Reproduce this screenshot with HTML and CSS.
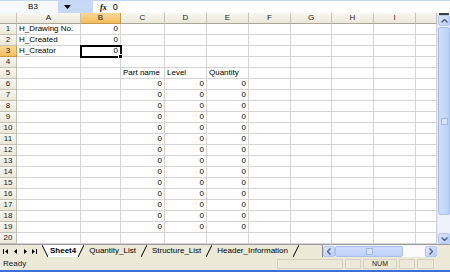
FILE: index.html
```html
<!DOCTYPE html>
<html lang="en">
<head>
    <meta charset="UTF-8">
    <title>Sheet4</title>
    <link rel="stylesheet" href="styles.css">
</head>
<body>

<div class="app">
    <div class="formula-bar">
        <div class="name-box">B3</div>
        <div class="name-drop">
            <svg width="7" height="4" viewBox="0 0 7 4"><polygon points="0,0 7,0 3.5,4" fill="#000"/></svg>
        </div>
        <div class="formula">
            <span class="fx">fx</span>
            <span class="fvalue">0</span>
        </div>
    </div>

    <div class="sheet">
        <table class="grid">
            <colgroup>
                <col class="w-hdr"><col class="w-a"><col class="w-b"><col class="w-c"><col class="w-d">
                <col class="w-e"><col class="w-f"><col class="w-g"><col class="w-h"><col class="w-i"><col class="w-j">
            </colgroup>
            <thead>
                <tr>
                    <th class="corner"></th>
                    <th>A</th><th class="sel">B</th><th>C</th><th>D</th><th>E</th>
                    <th>F</th><th>G</th><th>H</th><th>I</th><th class="split"></th>
                </tr>
            </thead>
            <tbody>
                <tr><th>1</th><td>H_Drawing No.</td><td class="n">0</td><td></td><td></td><td></td><td></td><td></td><td></td><td></td><td></td></tr>
                <tr><th>2</th><td>H_Created</td><td class="n">0</td><td></td><td></td><td></td><td></td><td></td><td></td><td></td><td></td></tr>
                <tr><th class="sel">3</th><td>H_Creator</td><td class="n active">0</td><td></td><td></td><td></td><td></td><td></td><td></td><td></td><td></td></tr>
                <tr><th>4</th><td></td><td></td><td></td><td></td><td></td><td></td><td></td><td></td><td></td><td></td></tr>
                <tr><th>5</th><td></td><td></td><td>Part name</td><td>Level</td><td>Quantity</td><td></td><td></td><td></td><td></td><td></td></tr>
                <tr><th>6</th><td></td><td></td><td class="n">0</td><td class="n">0</td><td class="n">0</td><td></td><td></td><td></td><td></td><td></td></tr>
                <tr><th>7</th><td></td><td></td><td class="n">0</td><td class="n">0</td><td class="n">0</td><td></td><td></td><td></td><td></td><td></td></tr>
                <tr><th>8</th><td></td><td></td><td class="n">0</td><td class="n">0</td><td class="n">0</td><td></td><td></td><td></td><td></td><td></td></tr>
                <tr><th>9</th><td></td><td></td><td class="n">0</td><td class="n">0</td><td class="n">0</td><td></td><td></td><td></td><td></td><td></td></tr>
                <tr><th>10</th><td></td><td></td><td class="n">0</td><td class="n">0</td><td class="n">0</td><td></td><td></td><td></td><td></td><td></td></tr>
                <tr><th>11</th><td></td><td></td><td class="n">0</td><td class="n">0</td><td class="n">0</td><td></td><td></td><td></td><td></td><td></td></tr>
                <tr><th>12</th><td></td><td></td><td class="n">0</td><td class="n">0</td><td class="n">0</td><td></td><td></td><td></td><td></td><td></td></tr>
                <tr><th>13</th><td></td><td></td><td class="n">0</td><td class="n">0</td><td class="n">0</td><td></td><td></td><td></td><td></td><td></td></tr>
                <tr><th>14</th><td></td><td></td><td class="n">0</td><td class="n">0</td><td class="n">0</td><td></td><td></td><td></td><td></td><td></td></tr>
                <tr><th>15</th><td></td><td></td><td class="n">0</td><td class="n">0</td><td class="n">0</td><td></td><td></td><td></td><td></td><td></td></tr>
                <tr><th>16</th><td></td><td></td><td class="n">0</td><td class="n">0</td><td class="n">0</td><td></td><td></td><td></td><td></td><td></td></tr>
                <tr><th>17</th><td></td><td></td><td class="n">0</td><td class="n">0</td><td class="n">0</td><td></td><td></td><td></td><td></td><td></td></tr>
                <tr><th>18</th><td></td><td></td><td class="n">0</td><td class="n">0</td><td class="n">0</td><td></td><td></td><td></td><td></td><td></td></tr>
                <tr><th>19</th><td></td><td></td><td class="n">0</td><td class="n">0</td><td class="n">0</td><td></td><td></td><td></td><td></td><td></td></tr>
                <tr><th>20</th><td></td><td></td><td></td><td></td><td></td><td></td><td></td><td></td><td></td><td></td></tr>
            </tbody>
        </table>

        <div class="vscroll">
            <div class="vs-split"></div>
            <div class="sb-btn">
                <svg width="7" height="4" viewBox="0 0 7 4"><polyline points="0.5,3.5 3.5,0.5 6.5,3.5" fill="none" stroke="#4d6185" stroke-width="1.4"/></svg>
            </div>
            <div class="vs-thumb"><span class="grip"></span></div>
            <div class="vs-track"></div>
            <div class="sb-btn">
                <svg width="7" height="4" viewBox="0 0 7 4"><polyline points="0.5,0.5 3.5,3.5 6.5,0.5" fill="none" stroke="#4d6185" stroke-width="1.4"/></svg>
            </div>
        </div>
    </div>

    <div class="tabbar">
        <div class="tab-nav">
            <svg width="6" height="5" viewBox="0 0 6 5"><rect x="0" y="0" width="1" height="5" fill="#000"/><polygon points="5,0 5,5 2,2.5" fill="#000"/></svg>
            <svg width="4" height="5" viewBox="0 0 4 5"><polygon points="3,0 3,5 0,2.5" fill="#000"/></svg>
            <svg width="4" height="5" viewBox="0 0 4 5"><polygon points="1,0 1,5 4,2.5" fill="#000"/></svg>
            <svg width="6" height="5" viewBox="0 0 6 5"><polygon points="0,0 0,5 3,2.5" fill="#000"/><rect x="4" y="0" width="1" height="5" fill="#000"/></svg>
        </div>
        <div class="tabs">
            <svg class="sep" width="6" height="12" viewBox="0 0 6 12"><polygon points="0,0 6,0 6,12" fill="#fff"/><line x1="0" y1="0" x2="6" y2="12" stroke="#000"/></svg>
            <span class="tab current">Sheet4</span>
            <svg class="sep" width="6" height="12" viewBox="0 0 6 12"><polygon points="0,0 6,0 0,12" fill="#fff"/><line x1="6" y1="0" x2="0" y2="12" stroke="#000"/></svg>
            <span class="tab">Quantity_List</span>
            <svg class="sep" width="6" height="12" viewBox="0 0 6 12"><line x1="6" y1="0" x2="0" y2="12" stroke="#000"/></svg>
            <span class="tab">Structure_List</span>
            <svg class="sep" width="6" height="12" viewBox="0 0 6 12"><line x1="6" y1="0" x2="0" y2="12" stroke="#000"/></svg>
            <span class="tab">Header_Information</span>
            <svg class="sep" width="6" height="12" viewBox="0 0 6 12"><line x1="6" y1="0" x2="0" y2="12" stroke="#000"/></svg>
        </div>
        <div class="hscroll">
            <div class="sb-btn">
                <svg width="4" height="7" viewBox="0 0 4 7"><polyline points="3.5,0.5 0.5,3.5 3.5,6.5" fill="none" stroke="#4d6185" stroke-width="1.4"/></svg>
            </div>
            <div class="hs-thumb"><span class="grip"></span></div>
            <div class="hs-track"></div>
            <div class="sb-btn">
                <svg width="4" height="7" viewBox="0 0 4 7"><polyline points="0.5,0.5 3.5,3.5 0.5,6.5" fill="none" stroke="#4d6185" stroke-width="1.4"/></svg>
            </div>
        </div>
        <div class="corner-box"></div>
    </div>

    <div class="statusbar">
        <span class="status-text">Ready</span>
        <div class="panels">
            <span class="panel p-wide"></span>
            <span class="panel p-small"></span>
            <span class="panel p-num">NUM</span>
            <span class="panel p-small"></span>
            <span class="panel p-mid"></span>
            <span class="panel p-tiny"></span>
        </div>
    </div>
</div>

</body>
</html>
```

FILE: styles.css
```css
body {
    margin: 0;
    font-family: "Liberation Sans", Arial, sans-serif;
    font-size: 8px;
    color: #000;
    background-color: #ffffff;
}
.app {
    width: 450px;
    height: 272px;
    overflow: hidden;
    display: flex;
    flex-direction: column;
}

/* formula bar */
.formula-bar {
    height: 12px;
    display: flex;
    border-top: 1px solid #c4d6f5;
    background-color: #ffffff;
}
.name-box {
    width: 58px;
    text-align: center;
    line-height: 12px;
    padding-left: 8px;
    box-sizing: border-box;
    background-color: #f6f9fe;
}
.name-drop {
    width: 35px;
    background-color: #c6d9f7;
    display: flex;
    align-items: center;
    padding-left: 6px;
    box-sizing: border-box;
}
.formula {
    flex: 1;
    display: flex;
    align-items: center;
    gap: 6px;
    padding-left: 7px;
}
.fx {
    font-family: "Liberation Serif", serif;
    font-style: italic;
    font-weight: bold;
    font-size: 8px;
}
.fvalue {
    font-size: 9px;
}

/* grid */
.sheet {
    display: flex;
    height: 231px;
}
.grid {
    width: 437px;
    table-layout: fixed;
    border-collapse: separate;
    border-spacing: 0;
}
.w-hdr { width: 17px; }
.w-a { width: 64px; }
.w-b { width: 40px; }
.w-c { width: 44px; }
.w-d, .w-e, .w-f, .w-h, .w-i { width: 42px; }
.w-g { width: 41px; }
.w-j { width: 21px; }

.grid td,
.grid th {
    height: 10px;
    padding: 0 2px;
    font-size: 8px;
    line-height: 10px;
    white-space: nowrap;
    overflow: hidden;
    border-right: 1px solid #d4d4d4;
    border-bottom: 1px solid #d4d4d4;
    text-align: left;
}
.grid th {
    font-weight: normal;
    text-align: center;
    padding: 0;
    background: linear-gradient(#f9f8f3, #ebe8d8);
    border-right-color: #c5c2b3;
    border-bottom-color: #c5c2b3;
    color: #222;
}
.grid thead th {
    border-bottom-color: #aca899;
}
.grid th.sel {
    background: linear-gradient(#fbd89a, #f3bd5c);
    border-right-color: #c79a4a;
    border-bottom-color: #c79a4a;
}
.grid td.n {
    text-align: right;
}
.grid td.active {
    position: relative;
    overflow: visible;
    outline: 2px solid #000;
    outline-offset: -1px;
}
.grid td.active::after {
    content: "";
    position: absolute;
    right: -3px;
    bottom: -3px;
    width: 3px;
    height: 3px;
    background-color: #000;
    border: 1px solid #fff;
    z-index: 2;
}

/* scrollbars */
.vscroll {
    width: 13px;
    display: flex;
    flex-direction: column;
    background-color: #eef2fb;
    border-left: 1px solid #e2e8f4;
    box-sizing: border-box;
}
.vs-split {
    height: 2px;
    background-color: #404040;
    margin: 0 1px;
}
.sb-btn {
    width: 11px;
    height: 11px;
    display: flex;
    align-items: center;
    justify-content: center;
    background: linear-gradient(135deg, #dbe6fd, #b8cdf7);
    border: 1px solid #b2c6ef;
    border-radius: 2px;
    box-sizing: border-box;
}
.vscroll .sb-btn {
    width: 12px;
}
.vs-thumb {
    flex: 1;
    margin-top: 1px;
    background: linear-gradient(90deg, #cfdefd, #bcd0f8);
    border: 1px solid #a9c0ef;
    border-radius: 2px;
    display: flex;
    align-items: center;
    justify-content: center;
}
.vs-track {
    height: 18px;
}
.grip {
    width: 5px;
    height: 5px;
    border: 1px solid #9fb6e6;
    background-color: #d7e3fc;
}

/* sheet tabs */
.tabbar {
    height: 13px;
    display: flex;
    background-color: #ece9d8;
    border-top: 1px solid #9d9da1;
    box-sizing: border-box;
}
.tab-nav {
    width: 42px;
    display: flex;
    align-items: center;
    gap: 5px;
    padding-left: 3px;
    box-sizing: border-box;
}
.tabs {
    width: 280px;
    display: flex;
    align-items: flex-start;
}
.sep {
    flex: none;
}
.tab {
    line-height: 12px;
    padding: 0 5px;
    font-size: 8px;
}
.tab.current {
    background-color: #ffffff;
    font-weight: bold;
    padding: 0 2px;
}
.hscroll {
    width: 115px;
    display: flex;
    align-items: center;
    background-color: #f4f5f8;
    border-left: 1px solid #8d8d8d;
    box-sizing: border-box;
}
.hscroll .sb-btn {
    width: 12px;
}
.hs-thumb {
    width: 68px;
    height: 11px;
    background: linear-gradient(#cfdefd, #bcd0f8);
    border: 1px solid #a9c0ef;
    border-radius: 2px;
    box-sizing: border-box;
    display: flex;
    align-items: center;
    justify-content: center;
}
.hs-track {
    flex: 1;
    height: 11px;
    background-color: #fbfbfd;
}
.corner-box {
    flex: 1;
    background-color: #ece9d8;
}

/* status bar */
.statusbar {
    height: 13px;
    display: flex;
    align-items: center;
    justify-content: space-between;
    background-color: #ece9d8;
    border-bottom: 2px solid #3d6fd9;
}
.status-text {
    padding-left: 3px;
    color: #222;
}
.panels {
    display: flex;
    gap: 2px;
    padding-right: 2px;
}
.panel {
    height: 10px;
    border: 1px solid #d6d2c2;
    box-sizing: border-box;
    font-size: 7px;
    line-height: 8px;
    text-align: center;
    color: #222;
}
.p-wide { width: 66px; }
.p-small { width: 16px; }
.p-num { width: 34px; }
.p-mid { width: 17px; }
.p-tiny { width: 12px; border: none; }
```
